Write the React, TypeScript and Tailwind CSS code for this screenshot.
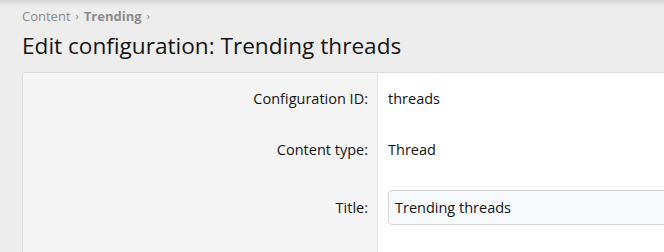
export default function App() {
  const rows = [
    { label: "Configuration ID:", value: "threads" },
    { label: "Content type:", value: "Thread" },
  ];

  return (
    <div
      className="relative h-[252px] w-[664px] overflow-hidden bg-[#ededed] text-[#141414]"
      style={{ fontFamily: '"Open Sans", "Noto Sans", Arial, sans-serif' }}
    >
      {/* top shadow */}
      <div className="absolute inset-x-0 top-0 h-[6px] bg-gradient-to-b from-black/10 to-transparent" />

      <div className="pl-[22px] pt-[6px]">
        <nav className="flex items-center gap-[5px] text-[13px] leading-[20px] text-[#8c8c8c]">
          <span>Content</span>
          <span className="text-[11px]">›</span>
          <span className="font-bold">Trending</span>
          <span className="text-[11px]">›</span>
        </nav>
        <h1 className="mt-[5px] text-[22.6px] leading-[30px] text-[#141414]">
          Edit configuration: Trending threads
        </h1>

        <div className="mt-[11px] h-[200px] w-[720px] overflow-hidden rounded-tl-[3px] border border-[#dcdcdc] bg-white">
          <div className="flex h-full">
            <div className="w-[355px] shrink-0 border-r border-[#e2e2e2] bg-[#f5f5f5]">
              {rows.map((r) => (
                <div
                  key={r.label}
                  className="pb-[15px] pr-[9px] pt-4 text-right text-[14.5px] leading-[20px]"
                >
                  {r.label}
                </div>
              ))}
              <div className="flex justify-end pr-[9px] pt-[23px] text-[14.5px] leading-[20px]">
                Title:
              </div>
            </div>
            <div className="flex-1">
              {rows.map((r) => (
                <div
                  key={r.value}
                  className="pb-[15px] pl-[10px] pt-4 text-[14.5px] leading-[20px]"
                >
                  {r.value}
                </div>
              ))}
              <div className="pl-[10px] pt-[15px]">
                <div className="flex h-[35px] items-center rounded-[4px] border border-[#d5d5d5] bg-[#f7fafc] px-[6px] text-[14.5px]">
                  Trending threads
                </div>
              </div>
            </div>
          </div>
        </div>
      </div>
    </div>
  );
}
